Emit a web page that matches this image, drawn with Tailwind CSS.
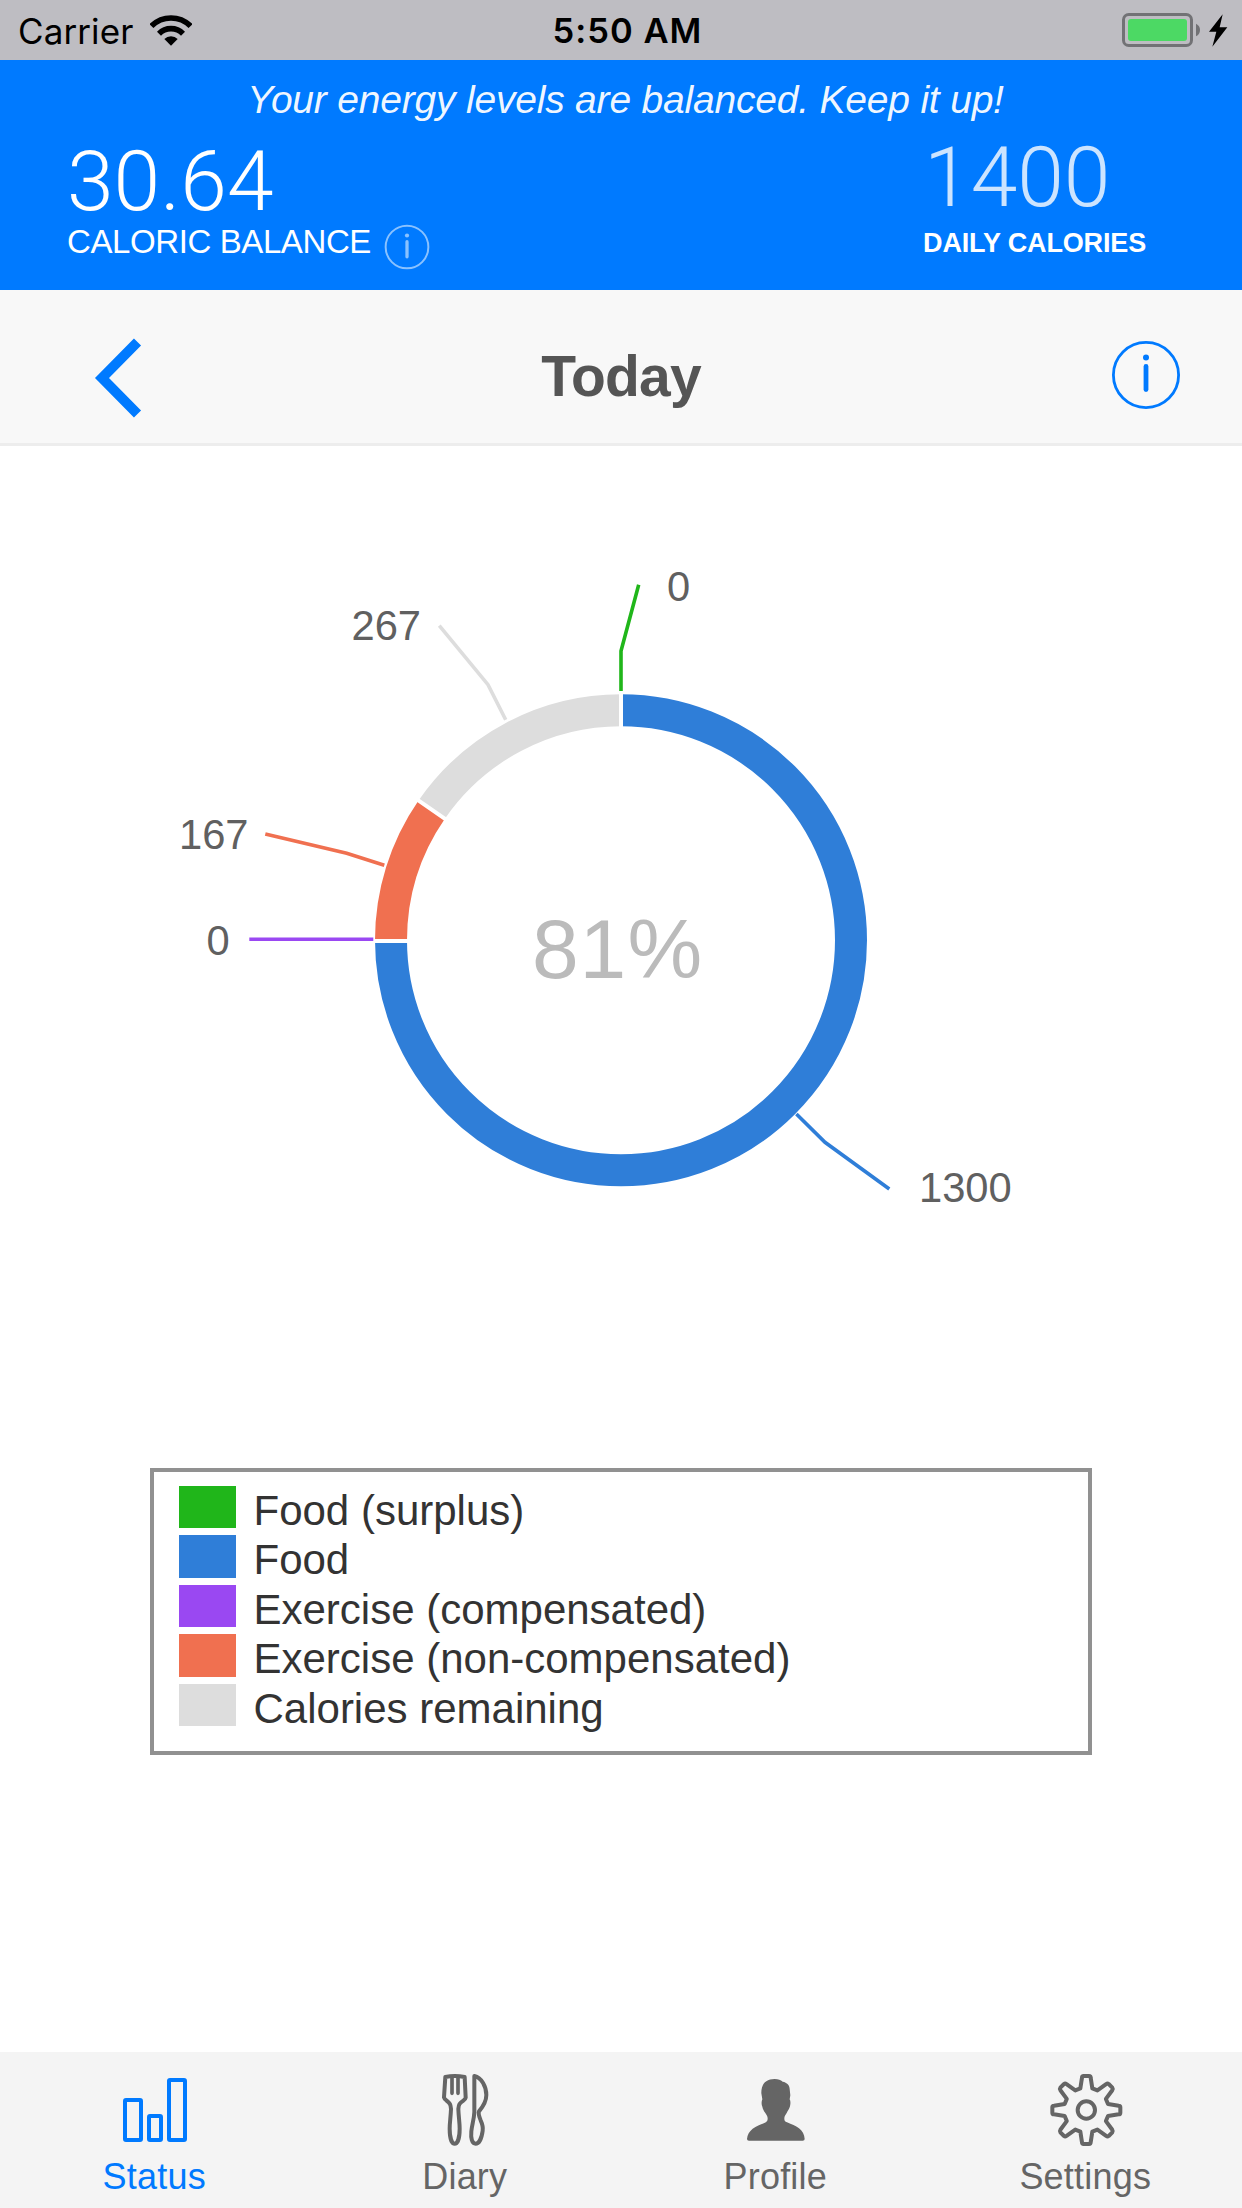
<!DOCTYPE html>
<html lang="en">
<head>
<meta charset="utf-8">
<title>Today</title>
<script src="https://cdn.jsdelivr.net/npm/@tailwindcss/browser@4"></script>
</head>
<body class="bg-white">
<div class="flex h-[2208px] w-[1242px] flex-col overflow-hidden bg-white font-['Liberation_Sans',Arial,sans-serif]">

  <!-- Status bar -->
  <div class="grid h-[60px] shrink-0 grid-cols-3 items-center bg-[#bebdc2] font-[Inter,sans-serif] text-black">
    <div class="flex items-center gap-[17px] pl-[18px]">
      <span class="pt-[2px] text-[35px] leading-[58px] tracking-[0.1px]">Carrier</span>
      <svg class="h-[31px] w-[42px]" viewBox="450 43 126 93" fill="none" stroke="#000">
        <path d="M454.300 76.300A83 83 0 0 1 571.700 76.300" stroke-width="17"/>
        <path d="M477 99A51 51 0 0 1 549 99" stroke-width="17"/>
        <path d="M513 135L493 115A28 28 0 0 1 533 115Z" fill="#000" stroke="none"/>
      </svg>
    </div>
    <div class="pt-[2px] pl-[13px] text-center text-[34.500px] leading-[58px] font-semibold tracking-[1px]">5:50 AM</div>
    <div class="flex justify-end pr-[13px]">
      <svg class="h-[36px] w-[108px]" viewBox="33 36 324 108">
        <rect x="40.500" y="43.500" width="204" height="93" rx="16" fill="none" stroke="#727275" stroke-width="9"/>
        <rect x="54" y="57" width="177" height="66" rx="9" fill="#4cd964"/>
        <path d="M258 71Q270 77 270 90T258 109Z" fill="#727275"/>
        <path d="M338 43L297 95H319L307 140L352 82H329Z" fill="#000"/>
      </svg>
    </div>
  </div>

  <!-- Balance summary -->
  <div class="h-[230px] shrink-0 bg-[#007aff] pt-[17px] text-white">
    <p class="pl-[9px] text-center text-[39px] leading-[46px] tracking-[-0.2px] whitespace-nowrap text-white/95 italic">Your energy levels are balanced. Keep it up!</p>
    <div class="flex justify-between pr-[96px] pl-[67px]">
      <div class="pt-[18px]">
        <div class="font-[Roboto,sans-serif] text-[84px] leading-[82px] font-light">30.64</div>
        <div class="-mt-[7px] flex items-center">
          <span class="text-[33px] leading-[40px] tracking-[-0.4px]">CALORIC BALANCE</span>
          <svg class="mt-[8px] -mb-[2px] ml-[13px] h-[46px] w-[46px]" viewBox="0 0 70 70" fill="none" stroke="#8ac2ff">
            <circle cx="35" cy="35" r="32.500" stroke-width="3"/>
            <circle cx="35" cy="17.500" r="3.200" fill="#8ac2ff" stroke="none"/>
            <path d="M35 27V50" stroke-width="5" stroke-linecap="round"/>
          </svg>
        </div>
      </div>
      <div class="pt-[14px]">
        <div class="pl-[1px] font-[Roboto,sans-serif] text-[84px] leading-[82px] font-light text-[#cce4ff]">1400</div>
        <div class="mt-[4px] text-[27px] leading-[40px] font-bold tracking-[-0.150px]">DAILY CALORIES</div>
      </div>
    </div>
  </div>

  <!-- Day navigation -->
  <div class="flex h-[156px] shrink-0 items-center justify-between border-b-[3px] border-[#ededed] bg-[#f8f8f8] pr-[61px] pl-[93px]">
    <svg class="mt-[22px] h-[84px] w-[50px]" viewBox="93 335.500 50 84" fill="none" stroke="#007aff" stroke-width="10">
      <path d="M137.500 341.500L102 377.500L137.500 413.500"/>
    </svg>
    <h1 class="mt-[19px] mr-[12px] text-[57px] leading-[64px] font-bold tracking-[-0.800px] text-[#555]">Today</h1>
    <svg class="mt-[16px] h-[70px] w-[70px]" viewBox="0 0 70 70" fill="none" stroke="#007aff">
      <circle cx="35" cy="35" r="32.600" stroke-width="2.800"/>
      <circle cx="35" cy="17.500" r="3" fill="#007aff" stroke="none"/>
      <path d="M35 26.500V49.500" stroke-width="4.800" stroke-linecap="round"/>
    </svg>
  </div>

  <!-- Calorie ring -->
  <svg class="h-[1022px] w-[1242px] shrink-0" viewBox="0 446 1242 1022" fill="none" font-family="'Liberation Sans',Arial,sans-serif" font-size="41.700">
    <g stroke-width="32">
      <path d="M621 710.300A230 230 0 1 1 391 940.300" stroke="#2f7ed8"/>
      <path d="M391 940.300A230 230 0 0 1 431.700 809.600" stroke="#f07050"/>
      <path d="M431.700 809.600A230 230 0 0 1 621 710.300" stroke="#ddd"/>
    </g>
    <path d="M621 690V730M372 941H412M414 797.400L449 821.600" stroke="#fff" stroke-width="4"/>
    <g stroke-width="3.600">
      <path d="M638.700 584.700L621 651V691" stroke="#20b61a"/>
      <path d="M439.300 625.700L488 684.700L505.700 719.700" stroke="#ddd"/>
      <path d="M265.300 834L346.700 853.300L384.300 865.300" stroke="#f07050"/>
      <path d="M249.300 939.300H373.300" stroke="#9a48f2"/>
      <path d="M796.400 1114L825 1142.300L889.300 1189" stroke="#2f7ed8"/>
    </g>
    <g fill="#606060">
      <text x="667" y="600.500">0</text>
      <text x="351.500" y="639.500">267</text>
      <text x="179" y="848.500">167</text>
      <text x="206.500" y="954.500">0</text>
      <text x="919" y="1202">1300</text>
    </g>
    <text x="532 579.500 627.500" y="978" font-size="84" fill="#bbb">81%</text>
  </svg>

  <!-- Legend -->
  <ul class="mx-[150px] flex h-[287px] shrink-0 flex-col gap-[7px] border-4 border-[#919191] pt-[13.500px] pl-[24.500px] text-[42px] leading-[42.600px] whitespace-nowrap text-[#333]">
    <li class="flex gap-[18px]"><span class="h-[42.600px] w-[57px] bg-[#20b61a]"></span><span class="translate-y-[4px]">Food (surplus)</span></li>
    <li class="flex gap-[18px]"><span class="h-[42.600px] w-[57px] bg-[#2f7ed8]"></span><span class="translate-y-[4px]">Food</span></li>
    <li class="flex gap-[18px]"><span class="h-[42.600px] w-[57px] bg-[#9a48f2]"></span><span class="translate-y-[4px]">Exercise (compensated)</span></li>
    <li class="flex gap-[18px]"><span class="h-[42.600px] w-[57px] bg-[#f07050]"></span><span class="translate-y-[4px]">Exercise (non-compensated)</span></li>
    <li class="flex gap-[18px]"><span class="h-[42.600px] w-[57px] bg-[#ddd]"></span><span class="translate-y-[4px]">Calories remaining</span></li>
  </ul>

  <!-- Tab bar -->
  <nav class="mt-auto grid h-[156px] shrink-0 grid-cols-4 bg-[#f4f4f4] pt-[20px] text-[36px] leading-[42px] tracking-[0.200px] text-[#656565]">
    <a class="flex flex-col items-center gap-[8px] text-[#007aff]">
      <svg class="h-[76px] w-[76px]" viewBox="111 96 228 228" fill="none" stroke="currentColor" stroke-width="12">
        <rect x="135" y="180" width="48" height="120" rx="3"/>
        <rect x="207" y="228" width="36" height="72" rx="3"/>
        <rect x="267" y="120" width="48" height="180" rx="3"/>
      </svg>
      <span class="mr-[2px]">Status</span>
    </a>
    <a class="flex flex-col items-center gap-[8px]">
      <svg class="h-[76px] w-[76px]" viewBox="1043 96 228 228" fill="none" stroke="currentColor" stroke-width="12" stroke-linejoin="round" stroke-linecap="round">
        <path d="M1095 111Q1123 105 1153 111L1156 173Q1155 178 1150 181C1137 190 1135 193 1134 207C1135 232 1138 248 1138 266C1138 292 1132 311 1123 311S1108 292 1108 266C1108 248 1111 232 1112 207C1111 193 1109 190 1098 181Q1092 177 1091 172Z"/>
        <path d="M1115 114V160M1133 114V160" stroke-width="11"/>
        <path d="M1182 108C1204 113 1218 140 1218 165C1218 185 1208 200 1196 214C1193 221 1196 229 1201 241C1206 252 1209 259 1207 272C1204 295 1196 311 1186 311C1175 311 1171 295 1173 274C1175 253 1181 240 1182 216Z"/>
      </svg>
      <span class="mr-[2px]">Diary</span>
    </a>
    <a class="flex flex-col items-center gap-[8px]">
      <svg class="h-[76px] w-[76px]" viewBox="115 96 228 228" fill="currentColor">
        <path d="M225 117C236 117 243 120 249 125C262 127 270 136 270 147L272 166L270 178C274 184 272 196 270 202C267 210 264 213 261 219C257 226 254 229 254 236C254 242 256 244 262 247C276 253 288 257 298 265C309 274 314 284 315 297Q315 302 309 302H148Q142 302 142 297C143 284 149 274 159 266C170 257 183 254 194 249C201 245 204 243 204 236C204 229 201 225 197 219C193 213 190 209 188 200C185 193 185 184 188 178L185 160C184 133 198 117 225 117Z"/>
      </svg>
      <span class="mr-[2px]">Profile</span>
    </a>
    <a class="flex flex-col items-center gap-[8px]">
      <svg class="h-[76px] w-[76px]" viewBox="1046 96 228 228" fill="none" stroke="currentColor" stroke-width="12" stroke-linejoin="round">
        <circle cx="1158" cy="210" r="26"/>
        <path transform="translate(1158 210)" d="M-18-65L-13-97Q-13-102-8-102H8Q13-102 13-97L18-65L33.200-58.700L59.400-77.800Q63.600-80.600 67-78L78-67Q80.600-63.600 77.800-59.400L58.700-33.200L65-18L97-13Q102-13 102-8V8Q102 13 97 13L65 18L58.700 33.200L77.800 59.400Q80.600 63.600 78 67L67 78Q63.600 80.600 59.400 77.800L33.200 58.700L18 65L13 97Q13 102 8 102H-8Q-13 102-13 97L-18 65L-33.200 58.700L-59.400 77.800Q-63.600 80.600-67 78L-78 67Q-80.600 63.600-77.800 59.400L-58.700 33.200L-65 18L-97 13Q-102 13-102 8V-8Q-102-13-97-13L-65-18L-58.700-33.200L-77.800-59.400Q-80.600-63.600-78-67L-67-78Q-63.600-80.600-59.400-77.800L-33.200-58.700Z"/>
      </svg>
      <span class="mr-[3px]">Settings</span>
    </a>
  </nav>
</div>
</body>
</html>
